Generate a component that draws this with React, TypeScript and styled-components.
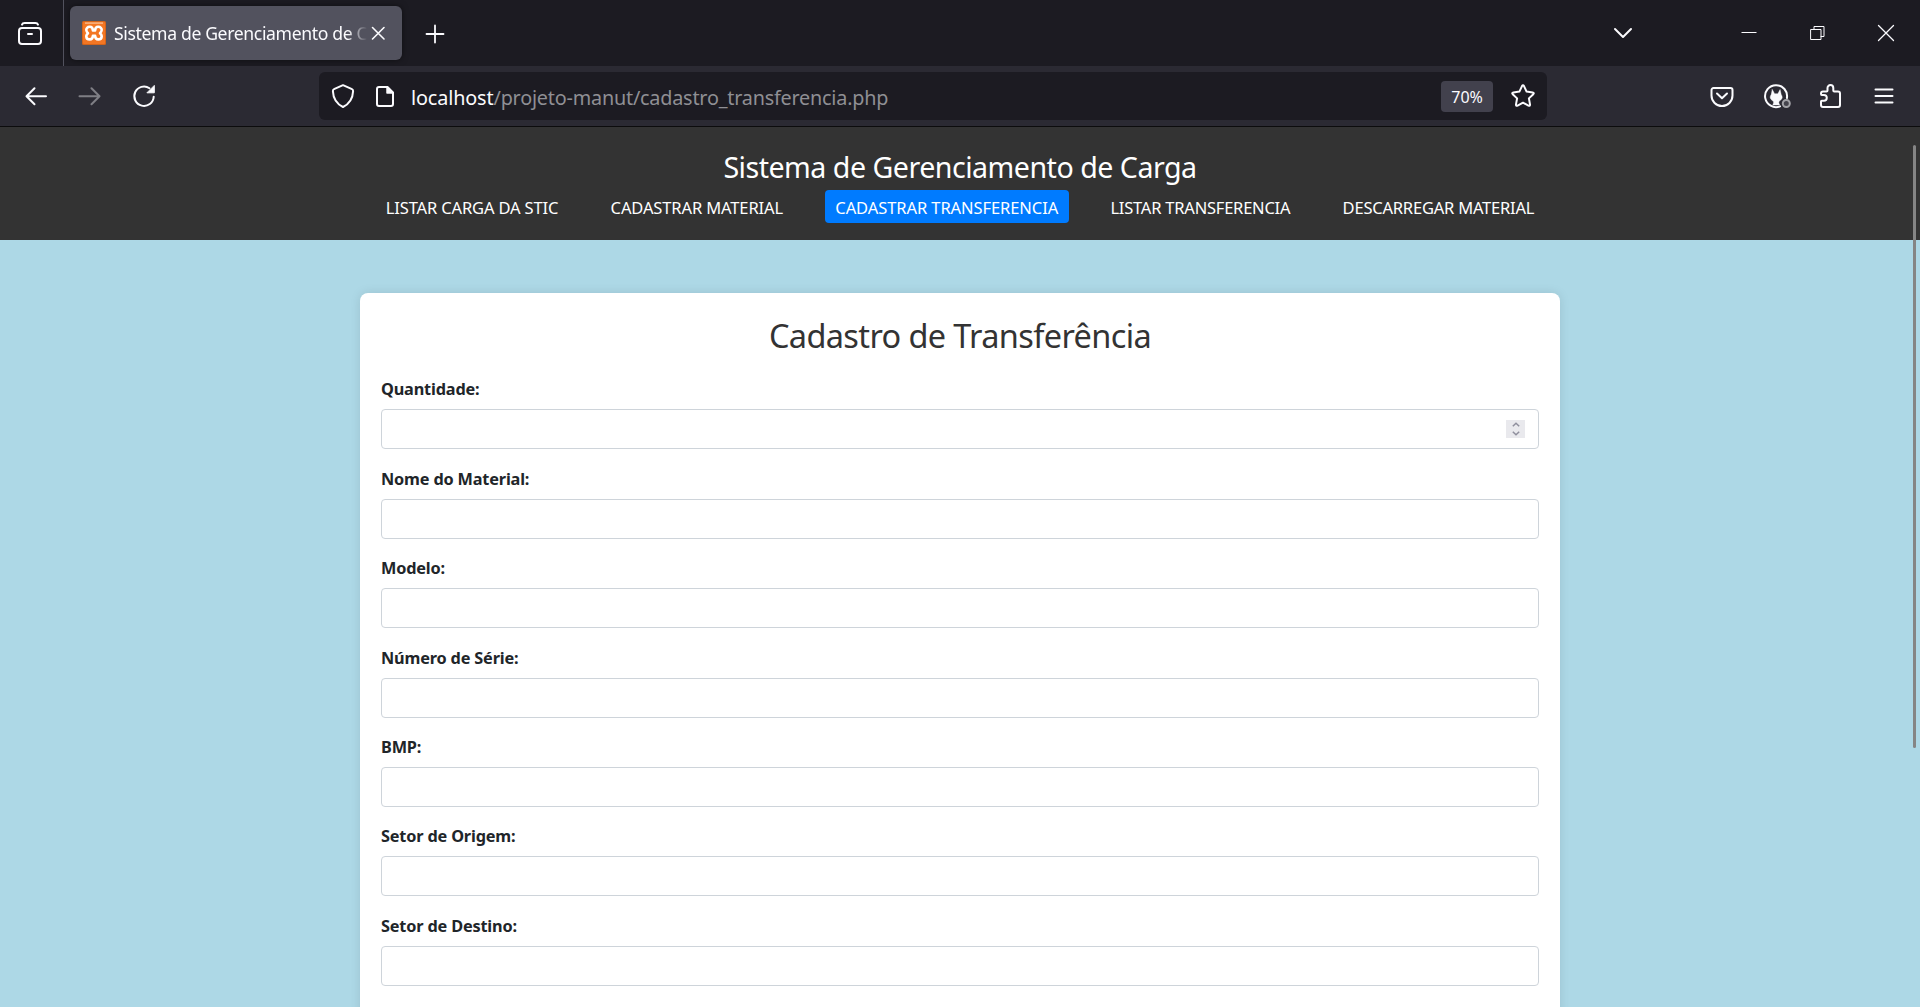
import React from 'react';
import styled, { createGlobalStyle, css } from 'styled-components';

const GlobalStyle = createGlobalStyle`
  *, *::before, *::after { box-sizing: border-box; }
  html, body { margin: 0; padding: 0; overflow: hidden; }
  body { font-family: "Noto Sans", "Open Sans", sans-serif; }
`;

const Window = styled.div`
  position: relative;
  display: flex;
  flex-direction: column;
  width: 1920px;
  height: 1007px;
  overflow: hidden;
  background: #1c1b22;
`;

/* ---------- browser chrome ---------- */

const TabStrip = styled.div`
  display: flex;
  flex: none;
  align-items: center;
  height: 66px;
  background: #1c1b22;
  color: #fbfbfe;
`;

const Slot = styled.span<{ $w: number; $dim?: boolean }>`
  display: flex;
  flex: none;
  align-items: center;
  justify-content: center;
  width: ${(p) => p.$w}px;
  height: 48px;
  opacity: ${(p) => (p.$dim ? 0.4 : 1)};

  svg {
    display: block;
    flex: none;
    overflow: visible;
  }
`;

const ViewButton = styled.div`
  display: flex;
  flex: none;
  align-items: center;
  width: 64px;
  height: 66px;
  padding-left: 18px;
  border-right: 1px solid #52525e;
`;

const Tab = styled.div`
  display: flex;
  flex: none;
  align-items: center;
  width: 332px;
  height: 54px;
  margin-left: 6px;
  padding-left: 12px;
  border-radius: 6px;
  background: #52525e;
  box-shadow: 0 0 6px rgba(0, 0, 0, 0.5);
`;

const TabTitle = styled.span`
  flex: none;
  width: 254px;
  margin: 0 -2px 1px 8px;
  overflow: hidden;
  font-size: 17.6px;
  line-height: 26px;
  letter-spacing: -0.36px;
  white-space: nowrap;
  -webkit-mask-image: linear-gradient(to left, transparent 1px, #000 20px);
  mask-image: linear-gradient(to left, transparent 1px, #000 20px);
`;

const WindowButtons = styled.div`
  display: flex;
  margin-left: auto;
`;

const ListTabs = styled.div`
  display: flex;
  margin-right: 61px;
`;

const Toolbar = styled.div`
  display: flex;
  flex: none;
  align-items: center;
  height: 61px;
  padding: 0 9px;
  border-bottom: 1px solid #0c0c0d;
  background: #2b2a33;
  color: #fbfbfe;
`;

const AddressBar = styled.div`
  display: flex;
  flex: none;
  align-items: center;
  width: 1228px;
  height: 48px;
  margin-left: 148px;
  border-radius: 6px;
  background: #1c1b22;
`;

const Address = styled.span`
  margin: 3px auto 0 8px;
  color: #8f8f94;
  font-size: 19.8px;
  line-height: 28px;
  letter-spacing: -0.2px;
  white-space: nowrap;
`;

const Host = styled.span`
  color: #fbfbfe;
  letter-spacing: -0.12px;
`;

const ZoomBadge = styled.span`
  display: flex;
  align-items: center;
  justify-content: center;
  width: 52px;
  height: 31px;
  margin-right: 6px;
  padding-top: 1px;
  border-radius: 4px;
  background: #42414d;
  font-size: 16px;
  letter-spacing: -0.1px;
`;

const Extensions = styled.div`
  display: flex;
  margin-left: auto;
`;

/* ---------- page ---------- */

const Page = styled.div`
  display: flex;
  flex: 1;
  flex-direction: column;
  align-items: center;
  min-height: 0;
  background: #add8e6;
`;

const Header = styled.header`
  display: flex;
  flex: none;
  flex-direction: column;
  align-items: center;
  width: 100%;
  height: 113px;
  padding-top: 22px;
  background: #333;
  color: #fff;
`;

const SiteTitle = styled.h1`
  margin: 0 0 5px;
  font-size: 28.6px;
  font-weight: 400;
  line-height: 36px;
  letter-spacing: -0.5px;
`;

const Nav = styled.nav`
  display: flex;
  gap: 31.3px;
`;

const NavLink = styled.a<{ $tracking: number; $active?: boolean }>`
  height: 33px;
  padding: 1px 10.5px 0;
  border-radius: 4px;
  color: #fff;
  font-size: 16.5px;
  line-height: 33px;
  letter-spacing: ${(p) => p.$tracking}px;
  white-space: nowrap;
  ${(p) =>
    p.$active &&
    css`
      background: #007bff;
    `}
`;

const Card = styled.main`
  flex: none;
  width: 1200px;
  height: 900px;
  margin-top: 53px;
  padding: 22px 21px 21px;
  border-radius: 8px;
  background: #fff;
  box-shadow: 0 0 10.5px rgba(0, 0, 0, 0.1);
`;

const CardTitle = styled.h2`
  margin: 0 0 20.2px;
  color: #333;
  font-size: 32.5px;
  font-weight: 400;
  line-height: 42px;
  letter-spacing: -0.63px;
  text-align: center;
`;

const Field = styled.div`
  display: flex;
  flex-direction: column;
  height: 89.45px;
`;

const Label = styled.label`
  margin-bottom: 7px;
  color: #212529;
  font-size: 16.3px;
  font-weight: 700;
  line-height: 25px;
  letter-spacing: -0.17px;
`;

const Control = styled.div`
  display: flex;
  align-items: center;
  height: 40px;
  padding: 0 13px;
  border: 1px solid #ced4da;
  border-radius: 4px;
  background: #fff;
`;

const Input = styled.input`
  flex: 1;
  min-width: 0;
  height: 30px;
  padding: 0;
  border: 0;
  outline: 0;
  background: transparent;
  font: inherit;
`;

const Stepper = styled.span`
  display: flex;
  flex-direction: column;
  align-items: center;
  justify-content: center;
  gap: 4px;
  width: 19px;
  height: 18px;
  background: #e9e9ed;

  svg { display: block; }
`;

const ScrollThumb = styled.div`
  position: absolute;
  top: 145px;
  right: 4px;
  width: 3px;
  height: 603px;
  border-radius: 2px;
  background: #858585;
`;

/* ---------- icons ---------- */

const Icon = ({ size = 24, width = 2, children }: { size?: number; width?: number; children: React.ReactNode }) => (
  <svg
    width={size}
    height={size}
    viewBox={`0 0 ${size} ${size}`}
    fill="none"
    stroke="currentColor"
    strokeWidth={width}
    strokeLinecap="round"
    strokeLinejoin="round"
  >
    {children}
  </svg>
);

const ViewIcon = () => (
  <Icon>
    <path d="M4 3.6Q4.6 2 6.6 2h10.8Q19.4 2 20 3.6" />
    <rect x="1" y="7" width="22" height="16" rx="3" />
    <path d="M10 13h4" />
  </Icon>
);

const XamppIcon = () => (
  <svg width="24" height="24" viewBox="0 0 24 24">
    <rect width="24" height="24" rx="1.5" fill="#d4641a" />
    <rect x="1" y="1" width="22" height="22" rx="1" fill="#f37623" />
    <rect x="3" y="1.4" width="18" height="1.4" fill="#fbb98a" />
    <path
      d="M7.800 5.800C5.400 5.800 4.200 7.400 4.300 9c.1 1.300.8 2.300 1.700 3.200-.9.8-1.600 1.800-1.700 3 0 1.700 1.200 3.200 3.500 3.200 2.400 0 3-1.700 3.100-3.500h2.200c.1 1.800.7 3.500 3.100 3.500 2.300 0 3.500-1.500 3.500-3.200-.1-1.200-.8-2.200-1.700-3 .9-.9 1.600-1.900 1.700-3.200.1-1.600-1.100-3.200-3.500-3.200-2.400 0-3 1.800-3.100 3.600h-2.200c-.1-1.800-.7-3.600-3.100-3.600z"
      fill="none"
      stroke="#fff"
      strokeWidth="2.6"
      strokeLinejoin="round"
    />
  </svg>
);

const BackIcon = () => (
  <Icon>
    <path d="M22 12.300H2.600M10.500 4.300l-8 8 8 8" />
  </Icon>
);

const ForwardIcon = () => (
  <Icon>
    <path d="M1.500 12.300h19.800M13.500 4.300l8 8-8 8" />
  </Icon>
);

const ReloadIcon = () => (
  <Icon>
    <path d="M21.700 12.700A9.700 9.700 0 1 1 17.500 4.200" />
    <path d="M22.300 1.800v7h-7z" fill="currentColor" strokeWidth="1" />
  </Icon>
);

const ShieldIcon = () => (
  <Icon>
    <path d="M12 1.200 21 5.200q1.200.5 1.100 2C21.800 14 19 19.400 12 23 5 19.400 2.200 14 1.900 7.200Q1.800 5.700 3 5.200z" />
  </Icon>
);

const PageIcon = () => (
  <Icon>
    <path d="M6 3h8.500L20 8.500V20a2 2 0 0 1-2 2H6a2 2 0 0 1-2-2V5a2 2 0 0 1 2-2z" />
    <path d="M14 3v6h6z" fill="currentColor" strokeWidth="1.5" />
  </Icon>
);

const StarIcon = () => (
  <Icon>
    <path d="M11 2.100q1-1.800 2 0l2.600 5.500 6 .8q1.900.4.700 1.800l-4.400 4.200 1.100 6q.2 1.900-1.600 1.200L12 18.700l-5.400 2.900q-1.800.7-1.600-1.200l1.100-6-4.400-4.200q-1.200-1.400.7-1.800l6-.8z" />
  </Icon>
);

const PocketIcon = () => (
  <Icon>
    <path d="M3.500 4h17a2 2 0 0 1 2 2v5.500a10 10 0 0 1-21 0V6a2 2 0 0 1 2-2z" />
    <path d="M7 9.500l5 4.700 5-4.700" />
  </Icon>
);

const CatIcon = () => (
  <Icon>
    <path d="M16 22.400A11 11 0 1 1 22.900 14" />
    <path
      d="M8.300 5.500l2.300 4.200h3.200l2.300-4.200 1.100 5c1.100 1.700 1.300 3 .6 4.200-.8 1.300-1.700 1.900-2.600 2.300l-.4 1.800.8 2.200H8.800l.8-2.200-.4-1.800c-.9-.4-1.800-1-2.600-2.300-.7-1.200-.5-2.500.6-4.200z"
      fill="currentColor"
      strokeWidth="0.4"
    />
    <circle cx="22.300" cy="19.500" r="3.500" fill="#45444d" stroke="#a3a3a8" />
  </Icon>
);

const PuzzleIcon = () => (
  <Icon>
    <path d="M5 7.500h3.500q1 0 1-1V4a2.900 2.900 0 0 1 5.800 0v2.500q0 1 1 1H20q2 0 2 2V21q0 2-2 2H5q-2 0-2-2v-3.500q0-.8.8-.8h2.100a2.900 2.900 0 0 0 0-5.800H3.800Q3 10.900 3 10V9.500q0-2 2-2z" />
  </Icon>
);

const MenuIcon = () => (
  <Icon>
    <path d="M3.500 5.500h17M3.500 12h17M3.500 18.500h17" />
  </Icon>
);

const fields = [
  { label: 'Quantidade:', numeric: true },
  { label: 'Nome do Material:' },
  { label: 'Modelo:' },
  { label: 'Número de Série:' },
  { label: 'BMP:' },
  { label: 'Setor de Origem:' },
  { label: 'Setor de Destino:' },
];

const links = [
  { text: 'LISTAR CARGA DA STIC', tracking: -0.14 },
  { text: 'CADASTRAR MATERIAL', tracking: -0.12 },
  { text: 'CADASTRAR TRANSFERENCIA', tracking: -0.08, active: true },
  { text: 'LISTAR TRANSFERENCIA', tracking: -0.22 },
  { text: 'DESCARREGAR MATERIAL', tracking: -0.21 },
];

export default function App() {
  return (
    <Window>
      <GlobalStyle />
      <TabStrip>
        <ViewButton>
          <ViewIcon />
        </ViewButton>
        <Tab>
          <XamppIcon />
          <TabTitle>Sistema de Gerenciamento de Carga</TabTitle>
          <Slot $w={28}>
            <Icon width={1.6}>
              <path d="M4.500 6.500l11.500 11.500M16 6.500L4.500 18" />
            </Icon>
          </Slot>
        </Tab>
        <Slot $w={65}>
          <Icon width={1.8}>
            <path d="M12 4.500v17M3.500 13h17" />
          </Icon>
        </Slot>
        <WindowButtons>
          <ListTabs>
            <Slot $w={60}>
              <Icon>
                <path d="M4 8l8 8 8-8" />
              </Icon>
            </Slot>
          </ListTabs>
          <Slot $w={69}>
            <Icon width={1}>
              <path d="M5 11.500h14" strokeLinecap="square" />
            </Icon>
          </Slot>
          <Slot $w={69}>
            <Icon width={1}>
              <path d="M5 8.500h10v10h-10zM8 8.500v-3h10v10h-3" strokeLinejoin="miter" />
            </Icon>
          </Slot>
          <Slot $w={68}>
            <Icon width={1.3}>
              <path d="M4.500 4.500l15 15M19.500 4.500l-15 15" />
            </Icon>
          </Slot>
        </WindowButtons>
      </TabStrip>

      <Toolbar>
        <Slot $w={54}><BackIcon /></Slot>
        <Slot $w={54} $dim><ForwardIcon /></Slot>
        <Slot $w={54}><ReloadIcon /></Slot>
        <AddressBar>
          <Slot $w={48}><ShieldIcon /></Slot>
          <Slot $w={36}><PageIcon /></Slot>
          <Address>
            <Host>localhost</Host>/projeto-manut/cadastro_transferencia.php
          </Address>
          <ZoomBadge>70%</ZoomBadge>
          <Slot $w={48}><StarIcon /></Slot>
        </AddressBar>
        <Extensions>
          <Slot $w={54}><PocketIcon /></Slot>
          <Slot $w={54}><CatIcon /></Slot>
          <Slot $w={54}><PuzzleIcon /></Slot>
          <Slot $w={54}><MenuIcon /></Slot>
        </Extensions>
      </Toolbar>

      <Page>
        <Header>
          <SiteTitle>Sistema de Gerenciamento de Carga</SiteTitle>
          <Nav>
            {links.map((link) => (
              <NavLink key={link.text} $tracking={link.tracking} $active={link.active}>
                {link.text}
              </NavLink>
            ))}
          </Nav>
        </Header>
        <Card>
          <CardTitle>Cadastro de Transferência</CardTitle>
          {fields.map((field) => (
            <Field key={field.label}>
              <Label>{field.label}</Label>
              <Control>
                <Input aria-label={field.label} />
                {field.numeric && (
                  <Stepper>
                    <svg width="8" height="5" viewBox="0 0 8 5" fill="none" stroke="#8f8f9d" strokeWidth="1.5">
                      <path d="M.8 4.200L4 1.200l3.200 3" />
                    </svg>
                    <svg width="8" height="5" viewBox="0 0 8 5" fill="none" stroke="#8f8f9d" strokeWidth="1.5">
                      <path d="M.8.8L4 3.800l3.200-3" />
                    </svg>
                  </Stepper>
                )}
              </Control>
            </Field>
          ))}
        </Card>
      </Page>
      <ScrollThumb />
    </Window>
  );
}
